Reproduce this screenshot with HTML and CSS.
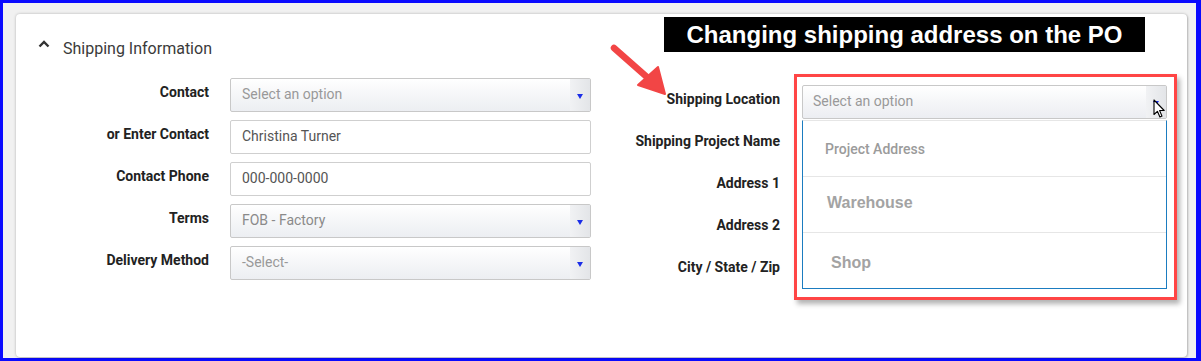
FILE: index.html
```html
<!DOCTYPE html>
<html>
<head>
<meta charset="utf-8">
<link rel="stylesheet" href="styles.css">
</head>
<body>
<div class="frame">
  <div class="card">
    <div class="banner">Changing shipping address on the PO</div>
    <svg class="callout-arrow" width="70" height="60" viewBox="0 0 70 60">
      <path d="M6 6 L40 36" stroke="#f24545" stroke-width="6.5" stroke-linecap="round" fill="none"/>
      <path d="M30 43 L50 25 L57 52 Z" fill="#f24545" stroke="#f24545" stroke-width="2" stroke-linejoin="round"/>
    </svg>
    <div class="header">
      <svg class="chevron" width="12" height="8" viewBox="0 0 12 8"><path d="M1.5 6.5 L6 2 L10.5 6.5" stroke="#333" stroke-width="2.4" fill="none"/></svg>
      <span class="title">Shipping Information</span>
    </div>
    <div class="form">
      <div class="col col-left">
        <div class="row">
          <label class="lbl">Contact</label>
          <div class="select"><span class="ph">Select an option</span><span class="arrow"><i class="tri"></i></span></div>
        </div>
        <div class="row">
          <label class="lbl">or Enter Contact</label>
          <div class="input">Christina Turner</div>
        </div>
        <div class="row">
          <label class="lbl">Contact Phone</label>
          <div class="input">000-000-0000</div>
        </div>
        <div class="row">
          <label class="lbl">Terms</label>
          <div class="select"><span class="val">FOB - Factory</span><span class="arrow"><i class="tri"></i></span></div>
        </div>
        <div class="row">
          <label class="lbl">Delivery Method</label>
          <div class="select"><span class="ph">-Select-</span><span class="arrow"><i class="tri"></i></span></div>
        </div>
      </div>
      <div class="col col-right">
        <div class="row">
          <label class="lbl">Shipping Location</label>
          <div class="field-wrap">
            <div class="select select-open"><span class="ph">Select an option</span><span class="arrow"><i class="tri"></i></span></div>
            <ul class="dropdown">
              <li class="opt opt-project">Project Address</li>
              <li class="opt opt-pasted opt-wh">Warehouse</li>
              <li class="opt opt-pasted opt-shop">Shop</li>
            </ul>
            <div class="highlight"></div>
            <svg class="cursor" width="13" height="20" viewBox="0 0 13 20">
              <path d="M1 1 L1 15.5 L4.4 12.3 L6.9 18 L9 17.1 L6.6 11.5 L11.2 11.5 Z" fill="#fff" stroke="#000" stroke-width="1.1" stroke-linejoin="round"/>
            </svg>
          </div>
        </div>
        <div class="row"><label class="lbl">Shipping Project Name</label><div class="blank"></div></div>
        <div class="row"><label class="lbl">Address 1</label><div class="blank"></div></div>
        <div class="row"><label class="lbl">Address 2</label><div class="blank"></div></div>
        <div class="row"><label class="lbl">City / State / Zip</label><div class="blank"></div></div>
      </div>
    </div>
  </div>
</div>
</body>
</html>
```

FILE: styles.css
```css
* { box-sizing: border-box; }
html, body { margin: 0; padding: 0; }
body { width: 1201px; height: 361px; overflow: hidden; font-family: Roboto, "Liberation Sans", sans-serif; }

.frame {
  width: 1201px;
  height: 361px;
  border: 3px solid #0a0aff;
  border-right-width: 5px;
  background: #f1f1f1;
  padding: 11px 8px 0 13px;
}

.card {
  position: relative;
  width: 1171px;
  height: 343px;
  background: #fff;
  border-radius: 4px;
  box-shadow: 0 0 3px rgba(0,0,0,0.25), 1px 1px 2px rgba(0,0,0,0.15);
  padding: 24px 0 0 22px;
}

.banner {
  position: absolute;
  left: 648px;
  top: 3px;
  width: 481px;
  height: 35px;
  background: #000;
  color: #fff;
  font-family: "Liberation Sans", Arial, sans-serif;
  font-weight: bold;
  font-size: 24px;
  line-height: 35px;
  text-align: center;
}

.callout-arrow {
  position: absolute;
  left: 592px;
  top: 28px;
}

.header {
  display: flex;
  align-items: center;
  height: 20px;
}
.chevron { margin-top: -9px; }
.title {
  margin-left: 13px;
  font-size: 16px;
  color: #3a3a3a;
}

.form {
  display: flex;
  margin-top: 20px;
  padding-left: 2px;
}
.col { display: flex; flex-direction: column; gap: 8px; }
.col-right { margin-left: 20px; padding-top: 7px; }

.row { display: flex; align-items: flex-start; }
.lbl {
  font-weight: bold;
  font-size: 14px;
  line-height: 17px;
  color: #222;
  text-align: right;
  padding-top: 6px;
}
.col-left .lbl { width: 169px; margin-right: 21px; }
.col-right .lbl { width: 169px; margin-right: 22px; }

.input, .select {
  width: 361px;
  height: 34px;
  border: 1px solid #cfcfcf;
  border-radius: 2px;
  font-size: 14px;
  line-height: 31px;
  padding-left: 11px;
  color: #555;
}
.input { background: #fff; }
.select {
  position: relative;
  display: flex;
  background: linear-gradient(to bottom, #ffffff 0%, #f5f6f8 50%, #eceef2 100%);
  border-color: #c8c8c8;
}
.ph { color: #999; }
.val { color: #8a8a8a; }
.arrow {
  position: absolute;
  right: 0;
  top: 0;
  width: 20px;
  height: 32px;
  background: linear-gradient(to right, #f1f2f4, #e3e5e8);
  display: flex;
  align-items: center;
  justify-content: center;
}
.tri {
  width: 0;
  height: 0;
  border-left: 3px solid transparent;
  border-right: 3px solid transparent;
  border-top: 5px solid #1a2de8;
  margin-top: 2px;
}

.blank { width: 365px; height: 34px; }

.field-wrap { position: relative; width: 365px; }
.select-open { width: 365px; padding-left: 10px; }

.dropdown {
  position: absolute;
  left: 0;
  top: 35px;
  width: 365px;
  height: 169px;
  margin: 0;
  padding: 0;
  list-style: none;
  background: #fff;
  border: 1px solid #1b7cc0;
  border-top-color: #e6e6e6;
  z-index: 2;
}
.opt {
  height: 56px;
  display: flex;
  align-items: center;
  border-bottom: 1px solid #e6e6e6;
}
.opt:last-child { border-bottom: none; }
.opt-project {
  font-weight: 500;
  font-size: 14px;
  color: #9b9b9b;
  padding-left: 22px;
}
.opt-pasted {
  font-family: "Liberation Sans", Arial, sans-serif;
  font-weight: bold;
  font-size: 16px;
  color: #a3a3a3;
}
.opt-wh { padding-left: 24px; padding-bottom: 4px; }
.opt-shop { padding-left: 28px; padding-top: 4px; }

.highlight {
  position: absolute;
  left: -8px;
  top: -11px;
  width: 383px;
  height: 226px;
  border: 3px solid #ff4545;
  box-shadow: 3px 4px 5px rgba(0,0,0,0.3);
  z-index: 3;
  pointer-events: none;
}

.cursor {
  position: absolute;
  left: 351px;
  top: 14px;
  z-index: 4;
}
```
